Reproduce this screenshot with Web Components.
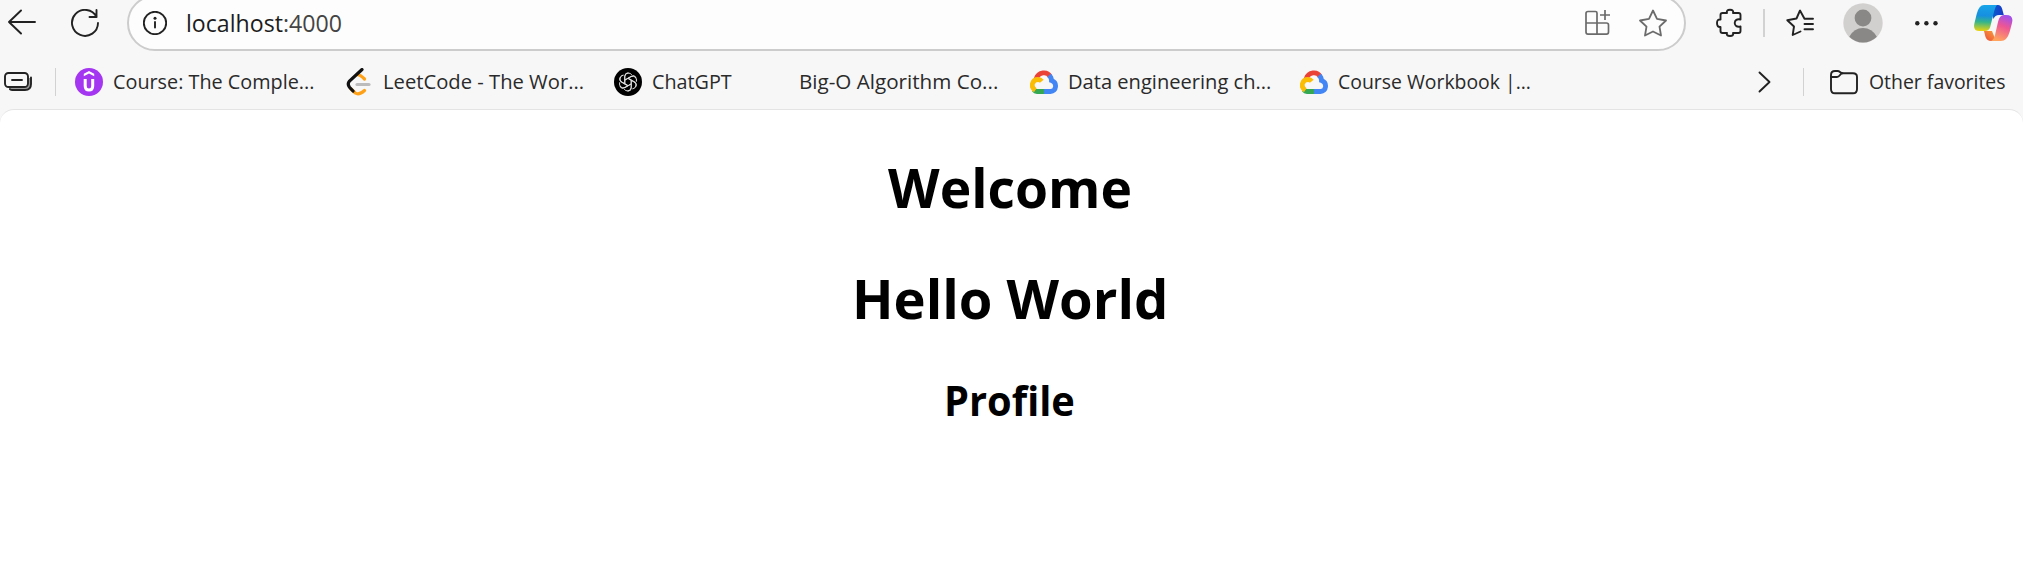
<!DOCTYPE html>
<html lang="en"><head><meta charset="utf-8"><title>localhost:4000</title>
<style>
html,body{margin:0;height:100%;background:#fff;overflow:hidden}
body{font-family:"Open Sans","Noto Sans",sans-serif;color:#2a2a2a}
</style></head><body>
<browser-window></browser-window>
<script>
const define=(name,html,init)=>customElements.define(name,class extends HTMLElement{
  constructor(){super();const t=document.createElement('template');t.innerHTML=html;
    this.attachShadow({mode:'open'}).append(t.content.cloneNode(true));}
  connectedCallback(){if(init)init(this);}
});

/* Icons share the window's coordinate grid; each has its own viewBox. */
const line='fill="none" stroke="#222" stroke-width="1.9" stroke-linecap="round" stroke-linejoin="round"';
const cloud=`<path d="M6.2 9.5C8.7 2.9 17 1.8 20.2 7.5" stroke="#ea4335"/><path d="M19 6.4C21 8 21.5 10 21.5 11.5C27.6 13.5 26.5 22.5 20.5 22.5H14" stroke="#4285f4"/><path d="M14 22.5H7Q5 22.5 4 21" stroke="#34a853"/><path d="M5.3 21.3C-.2 17.8 2.4 10.5 8 10.5Q10.4 10.5 11.8 12.2" stroke="#fbbc04"/>`;
const icons={
 back:[8,9,28,28,`<g ${line}><path d="M35 22H9M21 10.5L9 22L21 33.5"/></g>`],
 reload:[71,9,28,28,`<g ${line}><path d="M96.6 17A13 13 0 1 0 98 23M96.5 10V17H89.5"/></g>`],
 info:[143,11,24,24,`<g ${line}><circle cx="155" cy="23" r="11.2"/><path d="M155 22V27.5"/></g><circle cx="155" cy="18.3" r="1.5" fill="#222"/>`],
 apps:[1584,9,28,28,`<g fill="none" stroke="#6b6b6b" stroke-width="1.7"><path d="M1597 34V13Q1597 11.5 1595.5 11.5H1588Q1586 11.5 1586 13.5V32Q1586 34.2 1588 34.2H1606.5Q1608.5 34.2 1608.5 32V25Q1608.5 23 1606.5 23H1586"/><path d="M1605 10V20M1600 15H1610"/></g>`],
 star:[1639,9,28,28,`<path fill="none" stroke="#6b6b6b" stroke-width="1.8" stroke-linejoin="round" d="M1653 10.5L1657 18.8L1666 20.5L1659.5 26.7L1661 35.5L1653 31.5L1645 35.5L1646.5 26.7L1640 20.5L1649 18.8Z"/>`],
 puzzle:[1715,8,28,30,`<path ${line} d="M1720.5 19.5V15Q1720.5 13 1722.5 13H1727Q1726 9.7 1730 9.7Q1734 9.7 1733 13H1738.5Q1740.5 13 1740.5 15V19.5Q1735 18.5 1734.7 23Q1735 27.5 1740.5 26.5V31Q1740.5 33 1738.5 33H1733Q1734 36 1730 36Q1726 36 1727 33H1722.5Q1720.5 33 1720.5 31V27Q1717 27.5 1717 23Q1717 19 1720.5 19.5Z"/>`],
 favorites:[1786,9,30,28,`<path ${line} d="M1804.5 18.7L1800 10.5L1796.5 18.5L1787.3 20.3L1794 26.5L1792.7 35L1800.5 31.5M1804.5 18.7H1813M1804.5 24H1813M1804.5 29.3H1813"/>`],
 avatar:[1843,3,40,40,`<circle cx="1863" cy="23" r="19.7" fill="#d2d0ce"/><circle cx="1863" cy="18" r="8.4" fill="#8a8886"/><path d="M1849.3 36.7Q1854 28 1863 28Q1872 28 1876.8 36.7Q1871 42.5 1863 42.5Q1855 42.5 1849.3 36.7" fill="#8a8886"/>`],
 more:[1913,11,28,24,`<g fill="#222"><circle cx="1917.3" cy="23.3" r="2.2"/><circle cx="1926.4" cy="23.3" r="2.2"/><circle cx="1935.5" cy="23.3" r="2.2"/></g>`],
 copilot:[1973,4,40,38,`<defs><linearGradient id="a" x1=".35" y1="0" x2=".3" y2="1"><stop stop-color="#18a4e8"/><stop offset=".4" stop-color="#168fe0"/><stop offset=".65" stop-color="#36b58a"/><stop offset="1" stop-color="#ecd30b"/></linearGradient><linearGradient id="b" x1=".8" y1="0" x2=".45" y2="1"><stop stop-color="#9b50f5"/><stop offset=".45" stop-color="#ed5694"/><stop offset="1" stop-color="#ffa45f"/></linearGradient><linearGradient id="c"><stop stop-color="#0a64cc"/><stop offset="1" stop-color="#1739c9"/></linearGradient><linearGradient id="d" x1="1" y1="0" x2="0" y2="1"><stop stop-color="#f9a33c"/><stop offset="1" stop-color="#ed4b38"/></linearGradient></defs>
 <path d="M1990 5H1998Q2001 5 2002.2 9L2003.8 15H1999Q1995 15 1993.5 19Z" fill="url(#c)"/><path d="M1994 31H1984L1985.5 37Q1987 41 1991 41H1996L1992 31Z" fill="url(#d)"/>
 <path d="M1997 5.1H1984Q1979 5.1 1976.7 14L1974.5 23Q1972.5 31 1979.5 31H1985Q1989 31 1990.2 27L1993.2 15Q1995 7 1997 5.1Z" fill="url(#a)"/><path d="M2001 15H2006Q2014 15 2012 23L2009.6 32Q2007 41 2001 41H1990Q1993.5 41 1995 35L1998 22Q1999.5 15 2004 15Z" fill="url(#b)"/>`],
 tabs:[3,70,30,24,`<path d="M9 88.5H24Q29.5 88.5 29.5 84V78" fill="none" stroke="#999" stroke-width="2"/><g ${line}><rect x="5" y="73" width="23" height="14" rx="3.5"/><path d="M12 80H22"/><path d="M10 89.2Q11 90 12.5 90H25Q31 90 31 84V77.5"/></g>`],
 udemy:[75,68,28,28,`<circle cx="89" cy="82" r="14" fill="#a435f0"/><path d="M83.8 76.3V73.8L89 71L94.2 73.8V76.3L89 73.6Z" fill="#fff"/><path d="M85.2 79V86Q85.2 90 89 90Q92.7 90 92.7 86V79" fill="none" stroke="#fff" stroke-width="3"/>`],
 leetcode:[345,68,28,28,`<g fill="none" stroke-width="3.2" stroke-linecap="round"><path d="M358.5 75Q360.5 75 364.5 79" stroke="#ffa116"/><path d="M351 89L355.3 93Q359 95.5 364.5 90.5" stroke="#ffa116"/><path d="M362 69.5L349.5 81Q347 84 349.5 87.3L353 91" stroke="#111"/><path d="M357 84.5H369" stroke="#bcbcbc" stroke-width="3.2"/></g>`],
 chatgpt:[614,68,28,28,`<circle cx="628" cy="82" r="14" fill="#000"/><g fill="none" stroke="#ddd" stroke-width="1">${[0,60,120,180,240,300].map(a=>`<path transform="rotate(${a} 628 82)" d="M624.8 83.9V76.5Q625 73 628 73Q630.5 73 631.8 74.8M624.8 80.1L631 76.5Q634 75 636 78"/>`).join('')}</g>`],
 blank:[761,68,28,28,''],
 cloud:[0,-1,28,28,`<g fill="none" stroke-width="4.8">${cloud}</g>`],
 chevron:[1757,70,16,24,`<path ${line} d="M1759.5 72.5L1769.5 82L1759.5 91.5"/>`],
 folder:[1829,68,30,28,`<g ${line}><path d="M1831 75Q1831 71 1835 71H1837.5C1840 71 1840.5 73.3 1842.5 73.3H1853Q1857 73.3 1857 77V89Q1857 93.3 1853 93.3H1835Q1831 93.3 1831 89Z"/><path d="M1831 77H1837C1840 77 1840 73.3 1842.5 73.3"/></g>`]
};
define('ui-icon','<style>:host{display:block;flex:none}svg{display:block}</style><div></div>',el=>{
 const [x,y,w,h,art]=icons[el.getAttribute('name')];
 el.shadowRoot.querySelector('div').innerHTML=`<svg width="${w}" height="${h}" viewBox="${x} ${y} ${w} ${h}">${art}</svg>`;
});

/* Text fitted horizontally to a given width. */
define('fit-text','<style>:host{display:block;flex:none;white-space:nowrap}span{display:inline-block;transform-origin:0 50%}</style><span><slot></slot></span>',el=>{
 const s=el.shadowRoot.querySelector('span'),w=+el.getAttribute('width');
 el.style.width=w+'px';s.style.transform=`scaleX(${w/s.offsetWidth})`;
});
define('bar-divider','<style>:host{display:block;flex:none;width:2px;height:28px;background:#d2d2d2}</style>');
define('address-bar',`<style>:host{box-sizing:border-box;flex:none;display:flex;align-items:center;width:1559px;height:56px;border:2px solid #ccc;border-radius:28px;background:#fdfdfd;padding:0 17px 0 14px}fit-text{font-size:23.3px;line-height:30px;margin-left:19px;color:#1c1c1c}i{font-style:normal;color:#444}.apps{margin-left:auto;margin-right:27px}</style>
<ui-icon name="info"></ui-icon><fit-text width="156">localhost<i>:4000</i></fit-text><ui-icon class="apps" name="apps"></ui-icon><ui-icon name="star"></ui-icon>`);
define('nav-bar',`<style>:host{display:flex;align-items:center;height:46px;padding-left:8px}</style>
<ui-icon name="back"></ui-icon><ui-icon name="reload" style="margin-left:35px"></ui-icon><address-bar style="margin-left:28px"></address-bar>
<ui-icon name="puzzle" style="margin-left:29px"></ui-icon><bar-divider style="margin-left:20px"></bar-divider><ui-icon name="favorites" style="margin-left:21px"></ui-icon>
<ui-icon name="avatar" style="margin-left:27px"></ui-icon><ui-icon name="more" style="margin-left:30px"></ui-icon><ui-icon name="copilot" style="margin-left:32px"></ui-icon>`);
define('bookmark-item',`<style>:host{display:flex;flex:none;align-items:center;gap:10px;font-size:20px;line-height:28px}</style><slot name="icon"></slot><slot></slot>`);
const bm=(icon,text,w,box)=>`<bookmark-item style="width:${box}px"><ui-icon slot="icon" name="${icon}"></ui-icon><fit-text width="${w}">${text}</fit-text></bookmark-item>`;
define('bookmarks-bar',`<style>:host{display:flex;align-items:center;box-sizing:border-box;height:63px;padding:9px 0 0 3px}bar-divider{width:1px}</style>
<ui-icon name="tabs"></ui-icon><bar-divider style="margin:0 19px 0 22px"></bar-divider>
${bm('udemy','Course: The Comple...',201,270)}${bm('leetcode','LeetCode - The Wor...',201,269)}${bm('chatgpt','ChatGPT',80,147)}${bm('blank','Big-O Algorithm Co...',199,269)}${bm('cloud','Data engineering ch...',203,270)}${bm('cloud','Course Workbook |...',193,457)}
<ui-icon name="chevron"></ui-icon><bar-divider style="margin:0 25px 0 30px"></bar-divider>${bm('folder','Other favorites',137,190)}`);
define('page-content',`<style>:host{display:block;box-sizing:border-box;height:477px;background:#fff;border-top:1px solid #e4e4e4;border-radius:14px 14px 0 0;color:#000;padding-right:4px}h1,h2{margin:0;font-weight:700;display:flex;justify-content:center}h1{font-size:54.5px;line-height:74px}h2{font-size:41px;line-height:56px}.a{padding-top:40px}.b{padding-top:37px}.c{padding-top:37px}</style>
<h1 class="a"><fit-text width="244">Welcome</fit-text></h1><h1 class="b"><fit-text width="316">Hello World</fit-text></h1><h2 class="c"><fit-text width="131">Profile</fit-text></h2>`);
define('browser-window',`<style>:host{display:block;width:2023px;height:586px;overflow:hidden;background:#f7f7f7}</style><nav-bar></nav-bar><bookmarks-bar></bookmarks-bar><page-content></page-content>`);
</script></body></html>
